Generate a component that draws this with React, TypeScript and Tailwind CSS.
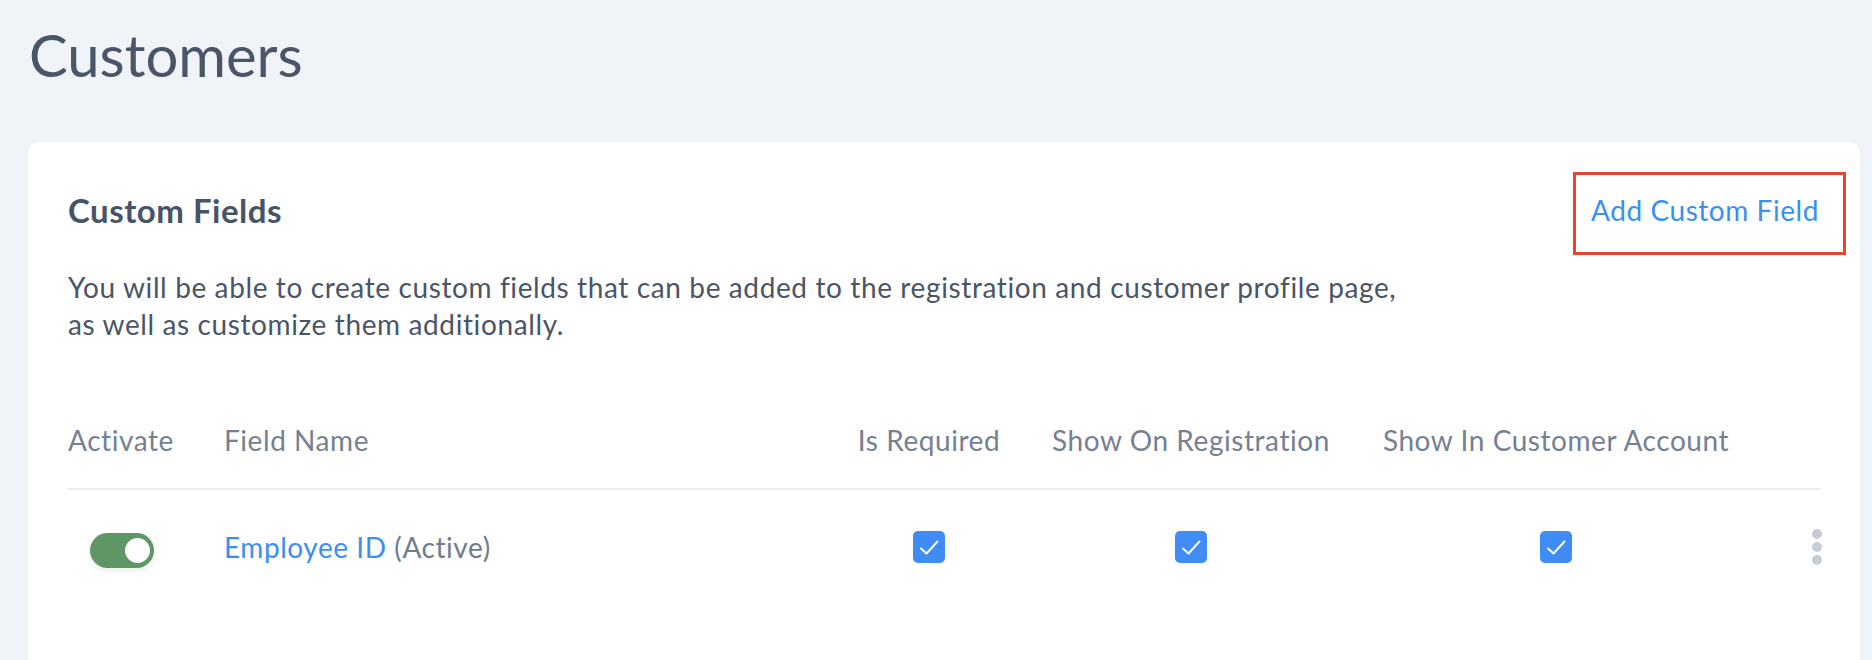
import React from "react";

const font = { fontFamily: "Lato, 'Open Sans', sans-serif" };

function Check() {
  return (
    <span className="inline-flex h-[32px] w-[32px] items-center justify-center rounded-[5px] bg-[#3f8cf5]">
      <svg width="32" height="32" viewBox="0 0 32 32" fill="none">
        <path d="M8 17.5L13.5 22.5L24.5 10.5" stroke="#fff" strokeWidth="2" strokeLinecap="round" strokeLinejoin="round" />
      </svg>
    </span>
  );
}

function Toggle() {
  return (
    <span className="inline-flex h-[35px] w-[64px] items-center justify-end rounded-full bg-[#5e9665] pr-[4px] shadow-[0_3px_6px_rgba(0,0,0,0.08)]">
      <span className="h-[25px] w-[25px] rounded-full bg-white" />
    </span>
  );
}

function Kebab() {
  return (
    <span className="flex flex-col items-center gap-[3px] -mr-[2px]">
      <span className="h-[10px] w-[10px] rounded-full bg-[#c5ccd4]" />
      <span className="h-[10px] w-[10px] rounded-full bg-[#c5ccd4]" />
      <span className="h-[10px] w-[10px] rounded-full bg-[#c5ccd4]" />
    </span>
  );
}

export default function App() {
  return (
    <div className="h-[660px] overflow-hidden bg-[#f0f3f7] pl-[28px] pr-[12px]" style={font}>
      <h1 className="pt-[20px] pl-[1px] text-[58px] leading-[70px] font-normal text-[#4a5567]">Customers</h1>
      <div className="mt-[52px] min-h-[600px] rounded-xl bg-white px-[40px] pt-[38px]">
        <div className="flex items-center justify-between">
          <h2 className="text-[33px] leading-[60px] font-bold tracking-[0.015em] text-[#475366]">Custom Fields</h2>
          <div className="relative mr-[1px]">
            <span className="pointer-events-none absolute -top-[20px] -bottom-[27px] -left-[18px] -right-[27px] border-[3px] border-[#e5442d]" />
            <button className="block text-[28px] leading-[36px] tracking-[0.02em] text-[#3b8ef5]">Add Custom Field</button>
          </div>
        </div>
        <p className="mt-[29px] text-[28px] leading-[37px] tracking-[0.022em] text-[#4a5567]">
          You will be able to create custom fields that can be added to the registration and customer profile page,
          <br />
          as well as customize them additionally.
        </p>
        <div className="mt-[79px] grid grid-cols-[156px_1fr_192px_332px_398px_65px] items-center border-b-2 border-[#e9edf2] pb-[30px] text-[28px] leading-[36px] tracking-[0.02em] text-[#758091]">
          <span>Activate</span>
          <span>Field Name</span>
          <span className="text-center">Is Required</span>
          <span className="text-center">Show On Registration</span>
          <span className="text-center">Show In Customer Account</span>
          <span />
        </div>
        <div className="grid h-[114px] grid-cols-[156px_1fr_192px_332px_398px_65px] items-center text-[28px] leading-[36px] tracking-[0.02em]">
          <span className="flex pl-[22px] pt-[7px]">
            <Toggle />
          </span>
          <span>
            <a className="text-[#3b8ef5]">Employee ID</a> <span className="text-[#707b8c]">(Active)</span>
          </span>
          <span className="flex justify-center">
            <Check />
          </span>
          <span className="flex justify-center">
            <Check />
          </span>
          <span className="flex justify-center">
            <Check />
          </span>
          <span className="flex justify-end">
            <Kebab />
          </span>
        </div>
      </div>
    </div>
  );
}
